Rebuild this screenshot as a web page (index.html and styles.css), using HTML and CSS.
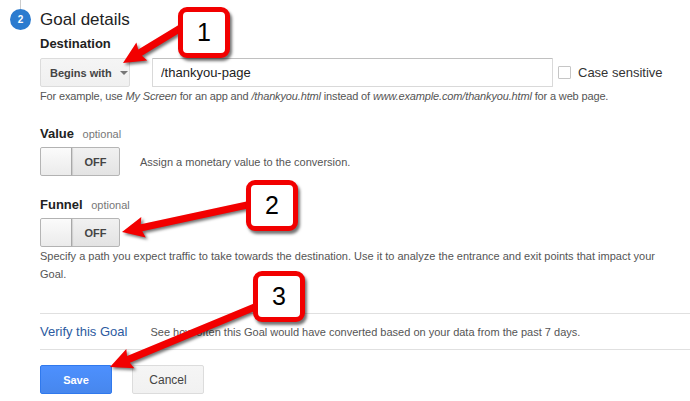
FILE: index.html
```html
<!DOCTYPE html>
<html lang="en">
<head>
  <meta charset="UTF-8">
  <meta name="viewport" content="width=device-width, initial-scale=1.0">
  <title>Goal details</title>
  <link rel="stylesheet" href="styles.css">
</head>
<body>
  <div class="goal-step">
    <div class="step-line"></div>
    <div class="step-head">
      <span class="step-num">2</span>
      <h2 class="step-title">Goal details</h2>
    </div>

    <div class="step-body">
      <div class="field">
        <div class="field-label">Destination</div>
        <div class="dest-row">
          <div class="select">Begins with <span class="caret"></span></div>
          <input class="text-input" type="text" value="/thankyou-page">
          <label class="check">
            <span class="checkbox"></span>
            <span>Case sensitive</span>
          </label>
        </div>
        <p class="help help-tight">
          For example, use <i>My Screen</i> for an app and <i>/thankyou.html</i> instead of <i>www.example.com/thankyou.html</i> for a web page.
        </p>
      </div>

      <div class="field field-gap">
        <div class="field-label">Value <span class="optional">optional</span></div>
        <div class="toggle-row">
          <div class="toggle">
            <span class="toggle-knob"></span>
            <span class="toggle-label">OFF</span>
          </div>
          <span class="toggle-text">Assign a monetary value to the conversion.</span>
        </div>
      </div>

      <div class="field field-gap">
        <div class="field-label">Funnel <span class="optional">optional</span></div>
        <div class="toggle-row">
          <div class="toggle">
            <span class="toggle-knob"></span>
            <span class="toggle-label">OFF</span>
          </div>
        </div>
        <p class="help help-wide">
          Specify a path you expect traffic to take towards the destination. Use it to analyze the entrance and exit points that impact your Goal.
        </p>
      </div>

      <div class="verify-row">
        <a href="#" class="verify-link">Verify this Goal</a>
        <span class="verify-text">See how often this Goal would have converted based on your data from the past 7 days.</span>
      </div>

      <div class="actions">
        <button class="btn btn-primary">Save</button>
        <button class="btn btn-default">Cancel</button>
      </div>
    </div>

    <!-- annotation arrows and numbered callouts -->
    <svg class="arrows" width="690" height="401" viewBox="0 0 690 401">
      <g fill="#f20000">
        <polygon transform="translate(123,63) rotate(-31.2)" points="0,0 22,-10.5 20,-3.6 72,-3.6 72,3.6 20,3.6 22,10.5"/>
        <polygon transform="translate(122,232) rotate(-12.2)" points="0,0 22,-10.5 20,-3.6 134,-3.6 134,3.6 20,3.6 22,10.5"/>
        <polygon transform="translate(110,367) rotate(-22.5)" points="0,0 22,-10.5 20,-3.6 165,-3.6 165,3.6 20,3.6 22,10.5"/>
      </g>
    </svg>
    <div class="callout callout-1">1</div>
    <div class="callout callout-2">2</div>
    <div class="callout callout-3">3</div>
  </div>
</body>
</html>
```

FILE: styles.css
```css
body {
  font-family: "Liberation Sans", Arial, sans-serif;
  margin: 0;
  padding: 0;
  background-color: #fff;
  color: #333;
}
.goal-step {
  position: relative;
  width: 690px;
  height: 401px;
  overflow: hidden;
}
.step-line {
  width: 1px;
  height: 9px;
  margin-left: 20px;
  background-color: #ccc;
}
.step-head {
  display: flex;
  align-items: center;
  gap: 9px;
  margin-left: 10px;
}
.step-num {
  width: 21px;
  height: 21px;
  border-radius: 50%;
  background-color: #2b7bcf;
  color: #fff;
  font-size: 10px;
  font-weight: bold;
  display: flex;
  align-items: center;
  justify-content: center;
}
.step-title {
  margin: 0;
  font-size: 17px;
  line-height: 20px;
  font-weight: normal;
  color: #222;
}
.step-body {
  padding-left: 40px;
}
.field-label {
  margin-top: 6px;
  font-size: 13px;
  line-height: 16px;
  font-weight: bold;
  color: #222;
}
.field-gap .field-label {
  margin-top: 21px;
}
.optional {
  margin-left: 5px;
  font-size: 11px;
  font-weight: normal;
  color: #777;
}
.dest-row {
  display: flex;
  align-items: center;
  margin-top: 6px;
  height: 29px;
}
.select {
  box-sizing: border-box;
  width: 90px;
  height: 29px;
  padding-left: 9px;
  display: flex;
  align-items: center;
  border: 1px solid #dcdcdc;
  border-radius: 2px;
  background: linear-gradient(#f5f5f5, #f0f0f0);
  font-size: 11px;
  font-weight: bold;
  color: #444;
}
.caret {
  margin-left: 8px;
  width: 0;
  height: 0;
  border-left: 4px solid transparent;
  border-right: 4px solid transparent;
  border-top: 4px solid #777;
}
.text-input {
  box-sizing: border-box;
  width: 401px;
  height: 29px;
  margin-left: 22px;
  padding: 0 8px;
  border: 1px solid #d9d9d9;
  border-top-color: #c0c0c0;
  border-radius: 1px;
  font-family: inherit;
  font-size: 13px;
  color: #222;
  outline: none;
}
.check {
  display: flex;
  align-items: center;
  gap: 7px;
  margin-left: 5px;
  font-size: 13px;
  color: #333;
}
.checkbox {
  box-sizing: border-box;
  width: 13px;
  height: 13px;
  border: 1px solid #c6c6c6;
  border-radius: 1px;
  background-color: #fff;
}
.help {
  margin: 0;
  font-size: 11px;
  line-height: 18px;
  color: #555;
}
.help-tight {
  letter-spacing: -0.15px;
}
.help-wide {
  max-width: 625px;
}
.toggle-row {
  display: flex;
  align-items: center;
  gap: 20px;
  margin-top: 5px;
}
.toggle {
  box-sizing: border-box;
  display: flex;
  width: 80px;
  height: 29px;
  border: 1px solid #b5b5b5;
  border-radius: 2px;
  background: linear-gradient(#f1f1f1, #e3e3e3);
}
.toggle-knob {
  width: 30px;
  border-right: 1px solid #a8a8a8;
  border-radius: 2px 0 0 2px;
  background: linear-gradient(#fbfbfb, #ebebeb);
  box-shadow: 1px 0 1px rgba(0, 0, 0, 0.12);
}
.toggle-label {
  flex: 1;
  display: flex;
  align-items: center;
  justify-content: center;
  font-size: 11px;
  font-weight: bold;
  color: #444;
}
.toggle-text {
  font-size: 11px;
  color: #555;
}
.verify-row {
  display: flex;
  align-items: center;
  gap: 23px;
  height: 35px;
  margin-top: 30px;
  border-top: 1px solid #e0e0e0;
  border-bottom: 1px solid #e0e0e0;
}
.verify-link {
  font-size: 13px;
  color: #2c5aa0;
  text-decoration: none;
}
.verify-text {
  font-size: 11px;
  color: #555;
}
.actions {
  display: flex;
  gap: 20px;
  margin-top: 15px;
}
.btn {
  box-sizing: border-box;
  width: 72px;
  height: 29px;
  border-radius: 2px;
  font-family: inherit;
  cursor: pointer;
}
.btn-primary {
  border: 1px solid #3079ed;
  background: linear-gradient(#4d90fe, #4787ed);
  color: #fff;
  font-size: 11px;
  font-weight: bold;
}
.btn-default {
  border: 1px solid #dcdcdc;
  background: linear-gradient(#f5f5f5, #f1f1f1);
  color: #444;
  font-size: 12px;
}
.arrows {
  position: absolute;
  left: 0;
  top: 0;
  pointer-events: none;
  filter: drop-shadow(2px 2px 1.5px rgba(0, 0, 0, 0.55));
}
.callout {
  position: absolute;
  box-sizing: border-box;
  width: 52px;
  height: 51px;
  border: 5px solid #f20000;
  border-radius: 9px;
  background-color: #fff;
  display: flex;
  align-items: center;
  justify-content: center;
  font-size: 25px;
  color: #000;
  box-shadow: 2px 3px 3px rgba(0, 0, 0, 0.55);
}
.callout-1 {
  left: 178px;
  top: 7px;
}
.callout-2 {
  left: 246px;
  top: 180px;
}
.callout-3 {
  left: 253px;
  top: 271px;
}
```
